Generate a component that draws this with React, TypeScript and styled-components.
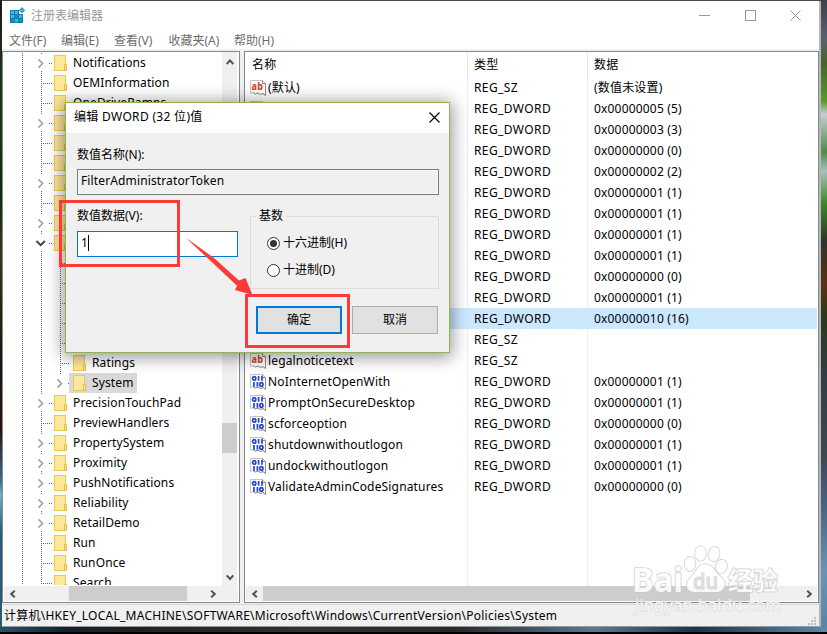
import React from 'react';
import styled, { createGlobalStyle, css } from 'styled-components';

const Global = createGlobalStyle`
  * { box-sizing: border-box; }
  body { margin: 0; overflow: hidden; }
  svg { display: block; flex: none; }
`;

const Desktop = styled.div`
  position: relative;
  width: 827px;
  height: 634px;
  padding: 1px 7px 7px 2px;
  overflow: hidden;
  font: 12px/16px 'Noto Sans', 'Noto Sans CJK SC', sans-serif;
  color: #000;
  white-space: nowrap;
  background:
    linear-gradient(#000, #000) 0 632px / 100% 2px no-repeat,
    linear-gradient(90deg, #2c5064, #14212c 8%, #29251f 22%, #34332e 38%, #27292b 55%, #5c7890 72%, #1d3345 84%, #6288a8) 0 627px / 100% 5px no-repeat,
    linear-gradient(#3d3f4d, #59616f 6%, #47642a 10%, #5a9a28 16%, #c4cfd1 18%, #4f8a4c 24%, #a9bfc0 27%, #3d8a28 32%, #303329 38%, #5a3216 45%, #2c3a1a 50%, #323c40 58%, #3f4852 72%, #4a6480 80%, #6c93b4 90%, #5583a6) 820px 0 / 7px 100% no-repeat,
    linear-gradient(#1b1a14, #20301a 10%, #14380f 22%, #0c2a10 30%, #3a3512 40%, #1c120c 58%, #2b160f 68%, #3a718f 76%, #76aecb 78%, #2a5c7c 84%, #31586f) 0 0 / 2px 100% no-repeat,
    #4b4d45;
`;

const Window = styled.div`
  display: flex;
  flex-direction: column;
  width: 819px;
  height: 626px;
  background: #fff;
  border-right: 2px solid #b4b6b8;
  border-bottom: 1px solid #96999c;
`;

const TitleBar = styled.header`
  display: flex;
  align-items: center;
  height: 29px;
  padding: 0 18px 0 7px;
  color: #999;
`;

const AppTitle = styled.span`
  margin-left: 5px;
  flex: 1;
`;

const WindowControls = styled.div`
  display: flex;
  gap: 34.5px;
`;

const MenuBar = styled.nav`
  display: flex;
  gap: 13.5px;
  height: 19px;
  padding: 3px 0 0 7px;
  color: #6d6d6d;
`;

const MenuItem = styled.span<{ $w: number }>`
  width: ${p => p.$w}px;
`;

const Panes = styled.main`
  display: flex;
  gap: 4px;
  height: 555px;
  padding: 2px 0 1px;
  background: #f0f0f0;
`;

const Pane = styled.section<{ $w: number }>`
  display: flex;
  flex-direction: column;
  flex: none;
  width: ${p => p.$w}px;
  height: 552px;
  border: 1px solid #828790;
  background: #fff;
  overflow: hidden;
`;

const PaneBody = styled.div`
  display: flex;
  height: 534px;
  overflow: hidden;
`;

const TreeView = styled.div`
  flex: 1;
  height: 533px;
  overflow: hidden;
  padding-top: 1px;
`;

const TreeRow = styled.div`
  display: flex;
  align-items: center;
  height: 20px;
`;

const TreeLabel = styled.span<{ $selected?: boolean; $w?: number }>`
  display: flex;
  align-items: center;
  height: 20px;
  padding: 0 4px 1px 6px;
  letter-spacing: 0.12px;
  ${p => p.$selected && css`
    background: #d9d9d9;
    width: ${p.$w}px;
  `}
`;

const VScroll = styled.div`
  display: flex;
  flex-direction: column;
  align-items: center;
  width: 15px;
  margin-right: 2px;
  padding: 6px 0 5px;
  background: #f0f0f0;
`;

const VThumb = styled.div`
  width: 15px;
  height: 30px;
  margin: 357px 0 auto;
  background: #cdcdcd;
`;

const HScroll = styled.div<{ $end: number }>`
  display: flex;
  align-items: center;
  height: 15px;
  margin: 0 1px;
  padding: 0 ${p => p.$end}px 0 5px;
  background: #f0f0f0;
`;

const HThumb = styled.div<{ $left: number; $w: number }>`
  width: ${p => p.$w}px;
  height: 15px;
  margin: 0 auto 0 ${p => p.$left}px;
  background: #cdcdcd;
`;

const ListView = styled.div`
  flex: 1;
  padding-top: 2px;
  background:
    linear-gradient(#e5e5e5, #e5e5e5) 222px 1px / 1px 24px no-repeat,
    linear-gradient(#e5e5e5, #e5e5e5) 342px 1px / 1px 24px no-repeat,
    linear-gradient(#eaf1fa, #eaf1fa) 222px 25px / 1px 100% no-repeat,
    linear-gradient(#eaf1fa, #eaf1fa) 342px 25px / 1px 100% no-repeat;
`;

const ListRow = styled.div<{ $header?: boolean; $selected?: boolean }>`
  display: grid;
  grid-template-columns: 222px 120px 1fr;
  align-items: center;
  height: ${p => (p.$header ? 22 : 21)}px;
  margin: 0 1px ${p => (p.$header ? 1 : 0)}px 0;
  background: ${p => (p.$selected ? '#cce8ff' : 'transparent')};
`;

const NameCell = styled.div<{ $header?: boolean }>`
  display: flex;
  align-items: center;
  gap: 2px;
  padding-left: ${p => (p.$header ? 7 : 5)}px;
  letter-spacing: 0.16px;
`;

const TypeCell = styled.div`
  padding-left: 7px;
  letter-spacing: 0.4px;
`;

const DataCell = styled.div`
  padding-left: 7px;
  letter-spacing: 0.18px;
`;

const StatusBar = styled.footer`
  display: flex;
  justify-content: space-between;
  height: 22px;
  padding: 3px 1px 0 2px;
  letter-spacing: 0.25px;
  background: #f0f0f0;
  border-top: 1px solid #d7d7d7;
`;

const Dialog = styled.div`
  position: absolute;
  left: 65px;
  top: 102px;
  width: 385px;
  height: 251px;
  background: #f0f0f0;
  border: 1px solid #8eb552;
  box-shadow: 0 2px 16px 2px rgba(0, 0, 0, 0.42);
`;

const DialogTitle = styled.div`
  display: flex;
  justify-content: space-between;
  align-items: center;
  height: 30px;
  padding: 0 9px 2px 8px;
  letter-spacing: 0.32px;
  background: #fff;
`;

const DialogBody = styled.div`
  padding: 14px 10px 0 11px;
`;

const FieldLabel = styled.div`
  height: 16px;
`;

const NameBlock = styled.div`
  display: flex;
  flex-direction: column;
  gap: 6px;
`;

const Field = styled.div<{ $active?: boolean }>`
  display: flex;
  align-items: center;
  width: ${p => (p.$active ? '161px' : '100%')};
  height: 26px;
  padding: 0 0 2px 3px;
  letter-spacing: 0.13px;
  border: 1px solid ${p => (p.$active ? '#0078d7' : '#7a7a7a')};
  background: ${p => (p.$active ? '#fff' : '#f0f0f0')};
  box-shadow: ${p => (p.$active ? 'none' : 'inset 0 0 0 1px #fafafa')};
`;

const Caret = styled.i`
  width: 1px;
  height: 16px;
  background: #000;
`;

const ValueArea = styled.div`
  display: flex;
  justify-content: space-between;
  margin-top: 13px;
  height: 81px;
`;

const ValueColumn = styled.div`
  display: flex;
  flex-direction: column;
  gap: 7px;
`;

const BaseGroup = styled.fieldset`
  display: flex;
  flex-direction: column;
  width: 189px;
  height: 81px;
  margin: 0;
  padding: 11px 0 0 16px;
  gap: 11px;
  border: 1px solid #dcdcdc;
`;

const BaseLegend = styled.legend`
  height: 16px;
  padding: 0 3px;
  margin-left: -11px;
`;

const Radio = styled.div`
  display: flex;
  align-items: center;
  gap: 3px;
  height: 16px;
`;

const Buttons = styled.div`
  display: flex;
  justify-content: flex-end;
  gap: 10px;
  padding: 17px 1px 0 0;
`;

const Button = styled.div<{ $default?: boolean }>`
  display: flex;
  align-items: center;
  justify-content: center;
  width: 86px;
  height: 28px;
  background: #e1e1e1;
  border: ${p => (p.$default ? '2px solid #0078d7' : '1px solid #adadad')};
`;

const Highlight = styled.div<{ $x: number; $y: number; $w: number; $h: number }>`
  position: absolute;
  left: ${p => p.$x}px;
  top: ${p => p.$y}px;
  width: ${p => p.$w}px;
  height: ${p => p.$h}px;
  border: 3px solid #fb3b38;
`;

const ArrowOverlay = styled.svg`
  position: absolute;
  left: 180px;
  top: 232px;
`;

const Watermark = styled.svg`
  position: absolute;
  left: 630px;
  top: 540px;
`;

type Guide = 'closed' | 'open' | 'leaf';
type Node = { label?: string; kind: Guide; depth?: number; last?: boolean; selected?: boolean };

const nodes: Node[] = [
  { label: 'Notifications', kind: 'closed' },
  { label: 'OEMInformation', kind: 'leaf' },
  { label: 'OneDriveRamps', kind: 'leaf' },
  { kind: 'closed' },
  { kind: 'leaf' },
  { kind: 'leaf' },
  { kind: 'closed' },
  { kind: 'leaf' },
  { kind: 'closed' },
  { kind: 'open' },
  { kind: 'leaf', depth: 1 },
  { kind: 'leaf', depth: 1 },
  { kind: 'leaf', depth: 1 },
  { kind: 'leaf', depth: 1 },
  { kind: 'leaf', depth: 1 },
  { label: 'Ratings', kind: 'leaf', depth: 1 },
  { label: 'System', kind: 'closed', depth: 1, last: true, selected: true },
  { label: 'PrecisionTouchPad', kind: 'closed' },
  { label: 'PreviewHandlers', kind: 'leaf' },
  { label: 'PropertySystem', kind: 'closed' },
  { label: 'Proximity', kind: 'closed' },
  { label: 'PushNotifications', kind: 'closed' },
  { label: 'Reliability', kind: 'closed' },
  { label: 'RetailDemo', kind: 'closed' },
  { label: 'Run', kind: 'leaf' },
  { label: 'RunOnce', kind: 'leaf' },
  { label: 'Search', kind: 'leaf' },
];

const values: [string, string, string][] = [
  ['(默认)', 'REG_SZ', '(数值未设置)'],
  ['', 'REG_DWORD', '0x00000005 (5)'],
  ['', 'REG_DWORD', '0x00000003 (3)'],
  ['', 'REG_DWORD', '0x00000000 (0)'],
  ['', 'REG_DWORD', '0x00000002 (2)'],
  ['', 'REG_DWORD', '0x00000001 (1)'],
  ['', 'REG_DWORD', '0x00000001 (1)'],
  ['', 'REG_DWORD', '0x00000001 (1)'],
  ['', 'REG_DWORD', '0x00000001 (1)'],
  ['', 'REG_DWORD', '0x00000000 (0)'],
  ['', 'REG_DWORD', '0x00000001 (1)'],
  ['', 'REG_DWORD', '0x00000010 (16)'],
  ['', 'REG_SZ', ''],
  ['legalnoticetext', 'REG_SZ', ''],
  ['NoInternetOpenWith', 'REG_DWORD', '0x00000001 (1)'],
  ['PromptOnSecureDesktop', 'REG_DWORD', '0x00000001 (1)'],
  ['scforceoption', 'REG_DWORD', '0x00000000 (0)'],
  ['shutdownwithoutlogon', 'REG_DWORD', '0x00000001 (1)'],
  ['undockwithoutlogon', 'REG_DWORD', '0x00000001 (1)'],
  ['ValidateAdminCodeSignatures', 'REG_DWORD', '0x00000000 (0)'],
];

const Guides = ({ kind, depth = 0, last }: Node) => {
  const x = depth ? 57.5 : 38.5;
  const dot = { stroke: '#6e6e6e', strokeWidth: 1, strokeDasharray: '1 1' };
  return (
    <svg width={depth ? 66 : 51} height="20" fill="none">
      <path d="M19.5 0V20" {...dot} />
      {depth > 0 && <path d="M38.5 0V20" {...dot} />}
      {kind === 'leaf' ? (
        <path d={`M${x} 0V20M${x + 1.5} 10.5H${x + 11}`} {...dot} />
      ) : (
        <>
          <path d={`M${x} 0V2${last ? '' : `M${x} 18V20`}M${x + 7.5} 10.5h4`} {...dot} />
          {kind === 'closed' ? (
            <path d={`M${x - 3} 6.3l4 4.2l-4 4.2`} stroke="#a6a6a6" strokeWidth="1.8" />
          ) : (
            <path d={`M${x - 5} 8l4.2 4.2l4.2 -4.2`} stroke="#404040" strokeWidth="1.9" />
          )}
        </>
      )}
    </svg>
  );
};

const Folder = () => (
  <svg width="13" height="16">
    <rect x=".5" y=".5" width="11" height="15" fill="#ffe79b" stroke="#efc84d" />
    <path d="M10.5 9.5h2v6h-2z" fill="#ffe79b" stroke="#e8bd3c" />
  </svg>
);

const FolderSlot = styled.span<{ $selected?: boolean; $indent?: boolean }>`
  display: flex;
  align-items: center;
  height: 20px;
  padding-left: ${p => (p.$indent ? 4 : 0)}px;
  background: ${p => (p.$selected ? '#d9d9d9' : 'transparent')};
`;

const ValueIcon = ({ text }: { text: boolean }) => (
  <svg width="16" height="16" fill="none">
    <path d="M.5 .5H12.5L15.5 3.5V15.5L13 13.5L10.5 14.5L8 13L5.5 14L3 12.5L.5 13.5Z" fill="#fff" stroke="#c4c4c4" />
    <path d="M12.5 .5V3.5H15.5V15.5L13 13.5L10.5 14.5L8 13L5.5 14L3 12.5" stroke="#8f8f8f" />
    {text ? (
      <text x="1.6" y="10.4" fontFamily="Noto Sans" fontSize="10.5" fontWeight="800" textLength="11.5" lengthAdjust="spacingAndGlyphs" fill="#d1492a">ab</text>
    ) : (
      <g stroke="#2344d4" strokeWidth="1.7">
        <ellipse cx="4.2" cy="4.4" rx="1.6" ry="1.7" />
        <path d="M8.600 2v4.800M12 2v4.800M4 8v4.800M7.400 8v4.800" />
        <ellipse cx="11.4" cy="10.4" rx="1.6" ry="1.7" />
      </g>
    )}
  </svg>
);

const Chevron = ({ dir }: { dir: 'up' | 'down' | 'left' | 'right' }) => {
  const d = {
    up: 'M0.7 6L4 2.4L7.3 6',
    down: 'M0.7 2.4L4 6L7.3 2.4',
    left: 'M5.8 .8L2.2 4L5.8 7.2',
    right: 'M2.2 .8L5.8 4L2.2 7.2',
  }[dir];
  return (
    <svg width="8" height="8" fill="none">
      <path d={d} stroke="#505050" strokeWidth="2" />
    </svg>
  );
};

const AppIcon = () => (
  <svg width="17" height="17">
    <path d="M1 3h9v4h4v9H1z" fill="#1479a8" />
    <g fill="#35bdec">
      <path d="M2 4h3v3H2zM6 4h3v3H6zM2 8h3v3H2zM6 8h3v3H6zM10 8h3v3h-3zM2 12h3v3H2zM6 12h3v3H6zM10 12h3v3h-3z" />
      <path d="M13 .7l2.5 2.5L13 5.7L10.5 3.2z" stroke="#1479a8" />
    </g>
    <path d="M6 8h3v3H6zM10 12h3v3h-3zM2 12h3v3H2z" fill="#0c91cc" />
  </svg>
);

const Grip = () => (
  <svg width="10" height="10" fill="#bfbfbf">
    <path d="M6 0h2v2h-2zM3 3h2v2h-2zM6 3h2v2h-2zM0 6h2v2h-2zM3 6h2v2h-2zM6 6h2v2h-2z" />
  </svg>
);

const GripSlot = styled.span`
  padding: 9px 0 0;
`;

export default function App() {
  return (
    <Desktop>
      <Global />
      <Window>
        <TitleBar>
          <AppIcon />
          <AppTitle>注册表编辑器</AppTitle>
          <WindowControls>
            <svg width="11" height="11"><path d="M0 5.5h11" stroke="#999" /></svg>
            <svg width="11" height="11"><rect x=".5" y=".5" width="10" height="10" fill="none" stroke="#999" /></svg>
            <svg width="11" height="11"><path d="M.5 .5l10 10M10.500 .5l-10 10" stroke="#999" /></svg>
          </WindowControls>
        </TitleBar>
        <MenuBar>
          <MenuItem $w={38.5}>文件(F)</MenuItem>
          <MenuItem $w={39.5}>编辑(E)</MenuItem>
          <MenuItem $w={41}>查看(V)</MenuItem>
          <MenuItem $w={52}>收藏夹(A)</MenuItem>
          <MenuItem $w={42}>帮助(H)</MenuItem>
        </MenuBar>
        <Panes>
          <Pane $w={238}>
            <PaneBody>
              <TreeView>
                {nodes.map((n, i) => (
                  <TreeRow key={i}>
                    <Guides {...n} />
                    <FolderSlot $selected={n.selected} $indent={!!n.depth}><Folder /></FolderSlot>
                    <TreeLabel $selected={n.selected} $w={51}>{n.label}</TreeLabel>
                  </TreeRow>
                ))}
              </TreeView>
              <VScroll>
                <Chevron dir="up" />
                <VThumb />
                <Chevron dir="down" />
              </VScroll>
            </PaneBody>
            <HScroll $end={21}>
              <Chevron dir="left" />
              <HThumb $left={52} $w={118} />
              <Chevron dir="right" />
            </HScroll>
          </Pane>
          <Pane $w={575}>
            <PaneBody>
              <ListView>
                <ListRow $header>
                  <NameCell $header>名称</NameCell>
                  <DataCell>类型</DataCell>
                  <DataCell>数据</DataCell>
                </ListRow>
                {values.map(([name, type, data], i) => (
                  <ListRow key={i} $selected={i === 11}>
                    <NameCell><ValueIcon text={type === 'REG_SZ'} />{name}</NameCell>
                    <TypeCell>{type}</TypeCell>
                    <DataCell>{data}</DataCell>
                  </ListRow>
                ))}
              </ListView>
            </PaneBody>
            <HScroll $end={4}>
              <Chevron dir="left" />
              <HThumb $left={4} $w={487} />
              <Chevron dir="right" />
            </HScroll>
          </Pane>
        </Panes>
        <StatusBar>
          <span>计算机\HKEY_LOCAL_MACHINE\SOFTWARE\Microsoft\Windows\CurrentVersion\Policies\System</span>
          <GripSlot><Grip /></GripSlot>
        </StatusBar>
      </Window>

      <Dialog>
        <DialogTitle>
          <span>编辑 DWORD (32 位)值</span>
          <svg width="11" height="11"><path d="M.5 .5l10 10M10.500 .5l-10 10" stroke="#000" strokeWidth="1.2" /></svg>
        </DialogTitle>
        <DialogBody>
          <NameBlock>
            <FieldLabel>数值名称(N):</FieldLabel>
            <Field>FilterAdministratorToken</Field>
          </NameBlock>
          <ValueArea>
            <ValueColumn>
              <FieldLabel>数值数据(V):</FieldLabel>
              <Field $active>1<Caret /></Field>
            </ValueColumn>
            <BaseGroup>
              <BaseLegend>基数</BaseLegend>
              <Radio>
                <svg width="13" height="13"><circle cx="6.5" cy="6.5" r="6" fill="#fff" stroke="#333" /><circle cx="6.5" cy="6.5" r="3.5" fill="#333" /></svg>
                十六进制(H)
              </Radio>
              <Radio>
                <svg width="13" height="13"><circle cx="6.5" cy="6.5" r="6" fill="#fff" stroke="#333" /></svg>
                十进制(D)
              </Radio>
            </BaseGroup>
          </ValueArea>
          <Buttons>
            <Button $default>确定</Button>
            <Button>取消</Button>
          </Buttons>
        </DialogBody>
      </Dialog>

      <Highlight $x={59} $y={200} $w={121} $h={67} />
      <Highlight $x={245} $y={294} $w={105} $h={54} />
      <ArrowOverlay width="76" height="66">
        <path d="M5.500 5.500L34 26L59 48.500L65.500 46L72.500 63L55 58L57 53.700L36 34Z" fill="#fb3b38" />
      </ArrowOverlay>

      <Watermark width="160" height="80">
        <g fill="#fff" fillOpacity=".85" stroke="#c9c9c9" strokeOpacity=".8" strokeWidth="1.6" paintOrder="stroke" fontFamily="Noto Sans, Noto Sans CJK SC" fontWeight="700">
          <ellipse cx="60" cy="24" rx="5.500" ry="7.200" />
          <ellipse cx="70.500" cy="13.500" rx="5.500" ry="7.500" />
          <ellipse cx="84" cy="14" rx="5.500" ry="7.200" transform="rotate(12 84 14)" />
          <ellipse cx="91.500" cy="26.500" rx="5.500" ry="7" transform="rotate(12 91 26)" />
          <path d="M75 24C84 24 85 33 91 37C98 43 95 52 86 52H65C56 52 54 43 61 37C67 32 67 24 75 24Z" />
          <text x="2" y="51.5" fontSize="34" textLength="51" lengthAdjust="spacingAndGlyphs">Bai</text>
          <text x="63" y="49" fontSize="22" fontWeight="500" textLength="25" lengthAdjust="spacingAndGlyphs" fill="#dcdcdc" strokeWidth="1">du</text>
          <text x="98" y="50" fontSize="25" textLength="50">经验</text>
          <text x="5" y="71" fontSize="17" fontWeight="400" textLength="146" lengthAdjust="spacingAndGlyphs" strokeWidth="1">jingyan.baidu.com</text>
        </g>
      </Watermark>
    </Desktop>
  );
}
